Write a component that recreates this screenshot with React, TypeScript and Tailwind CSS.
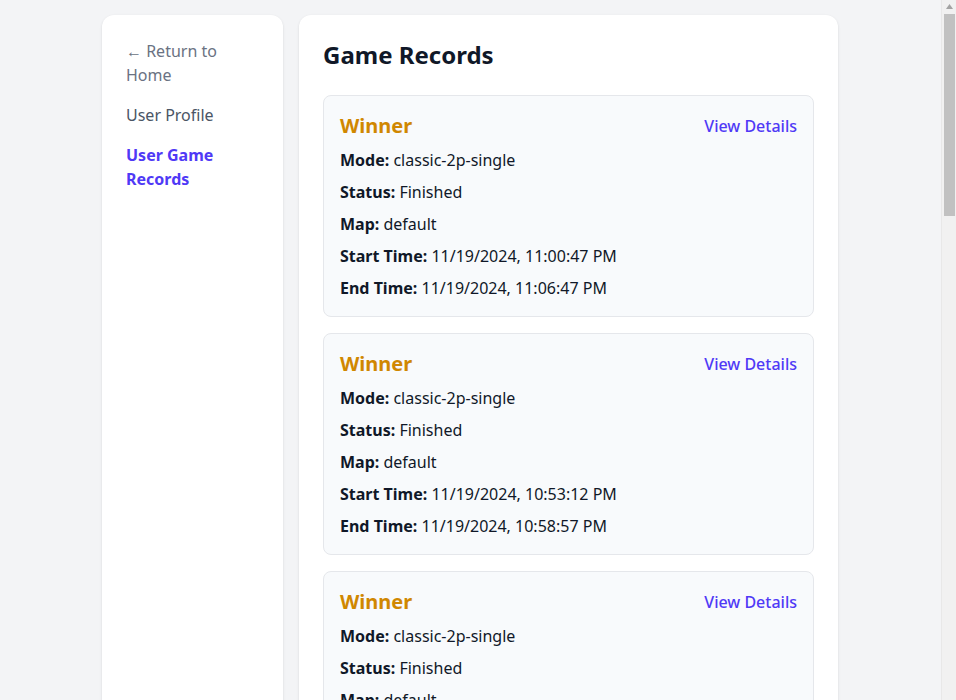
const records = [
  { mode: "classic-2p-single", status: "Finished", map: "default", start: "11/19/2024, 11:00:47 PM", end: "11/19/2024, 11:06:47 PM" },
  { mode: "classic-2p-single", status: "Finished", map: "default", start: "11/19/2024, 10:53:12 PM", end: "11/19/2024, 10:58:57 PM" },
  { mode: "classic-2p-single", status: "Finished", map: "default", start: "11/19/2024, 10:41:05 PM", end: "11/19/2024, 10:47:30 PM" },
  { mode: "classic-2p-single", status: "Finished", map: "default", start: "11/19/2024, 10:30:22 PM", end: "11/19/2024, 10:36:14 PM" },
];

function Field({ label, value }: { label: string; value: string }) {
  return (
    <p>
      <span className="font-bold">{label}:</span> {value}
    </p>
  );
}

// stand-in for the browser's classic scrollbar seen in the reference
function Scrollbar() {
  return (
    <div className="fixed right-0 top-0 flex h-screen w-[15px] flex-col items-center border-l border-[#e8e8e8] bg-[#f1f1f1]">
      <svg width="15" height="14" viewBox="0 0 15 14" className="shrink-0">
        <path d="M7.5 4 L11 9 L4 9 Z" fill="#a3a3a3" />
      </svg>
      <div className="h-[202px] w-[11px] bg-[#c1c1c1]" />
    </div>
  );
}

export default function App() {
  return (
    <div className="min-h-screen bg-gray-100 pr-4 font-['Noto_Sans',sans-serif] text-gray-900">
      <div className="mx-auto flex max-w-3xl gap-4 px-4 py-[15px]">
        <aside className="w-[181px] shrink-0 rounded-xl bg-white p-6 shadow-sm">
          <nav className="flex flex-col gap-4 text-base leading-6">
            <a href="#" className="text-gray-500">← Return to Home</a>
            <a href="#" className="text-gray-600">User Profile</a>
            <a href="#" className="font-bold text-indigo-600">User Game Records</a>
          </nav>
        </aside>

        <main className="flex-1 rounded-xl bg-white p-6 shadow-sm">
          <h1 className="mb-6 text-2xl font-bold leading-8 text-gray-900">Game Records</h1>
          <div className="flex flex-col gap-4">
            {records.map((r, i) => (
              <div key={i} className="rounded-lg border border-gray-200 bg-slate-50 p-4">
                <div className="mb-2 flex items-center justify-between">
                  <span className="text-xl font-bold leading-7 text-yellow-600">Winner</span>
                  <a href="#" className="font-medium text-indigo-600">View Details</a>
                </div>
                <div className="flex flex-col gap-2 leading-6">
                  <Field label="Mode" value={r.mode} />
                  <Field label="Status" value={r.status} />
                  <Field label="Map" value={r.map} />
                  <Field label="Start Time" value={r.start} />
                  <Field label="End Time" value={r.end} />
                </div>
              </div>
            ))}
          </div>
        </main>
      </div>
      <Scrollbar />
    </div>
  );
}
